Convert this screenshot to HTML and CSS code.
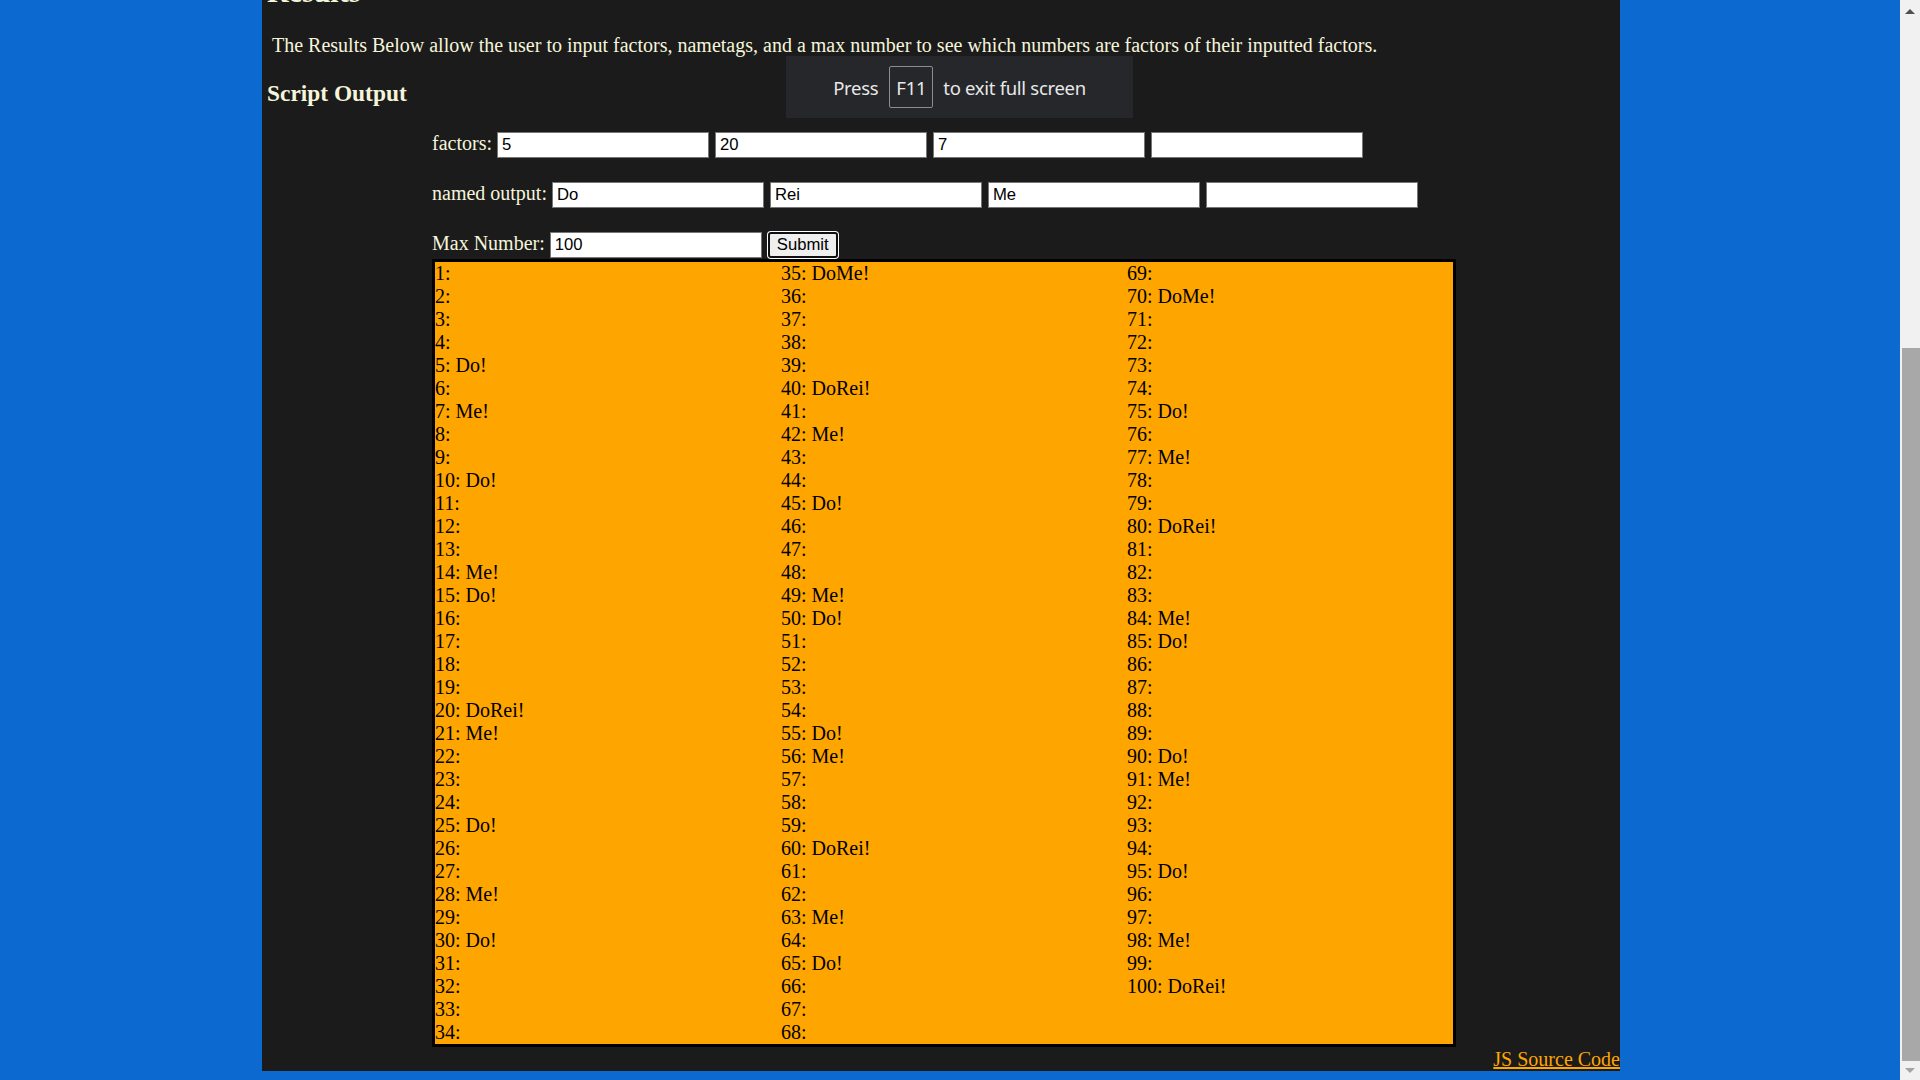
FILE: index.html
```html
<!DOCTYPE html>
<html lang="en">
<head>
<meta charset="utf-8">
<title>Factor Names</title>
<link rel="stylesheet" href="styles.css">
</head>
<body>
<div class="page">
  <h2 class="title">Results</h2>
  <p class="intro">The Results Below allow the user to input factors, nametags, and a max number to see which numbers are factors of their inputted factors.</p>
  <h3 class="subtitle">Script Output</h3>
  <div class="row row-factors">
    <span class="label">factors:</span>
    <input class="field" type="text" value="5">
    <input class="field" type="text" value="20">
    <input class="field" type="text" value="7">
    <input class="field" type="text" value="">
  </div>
  <div class="row row-names">
    <span class="label">named output:</span>
    <input class="field" type="text" value="Do">
    <input class="field" type="text" value="Rei">
    <input class="field" type="text" value="Me">
    <input class="field" type="text" value="">
  </div>
  <div class="row row-max">
    <span class="label">Max Number:</span>
    <input class="field" type="text" value="100">
    <button class="submit" type="button">Submit</button>
  </div>
  <div class="output">
    <div>1:</div><div>2:</div><div>3:</div><div>4:</div><div>5: Do!</div><div>6:</div><div>7: Me!</div><div>8:</div><div>9:</div><div>10: Do!</div>
    <div>11:</div><div>12:</div><div>13:</div><div>14: Me!</div><div>15: Do!</div><div>16:</div><div>17:</div><div>18:</div><div>19:</div><div>20: DoRei!</div>
    <div>21: Me!</div><div>22:</div><div>23:</div><div>24:</div><div>25: Do!</div><div>26:</div><div>27:</div><div>28: Me!</div><div>29:</div><div>30: Do!</div>
    <div>31:</div><div>32:</div><div>33:</div><div>34:</div><div>35: DoMe!</div><div>36:</div><div>37:</div><div>38:</div><div>39:</div><div>40: DoRei!</div>
    <div>41:</div><div>42: Me!</div><div>43:</div><div>44:</div><div>45: Do!</div><div>46:</div><div>47:</div><div>48:</div><div>49: Me!</div><div>50: Do!</div>
    <div>51:</div><div>52:</div><div>53:</div><div>54:</div><div>55: Do!</div><div>56: Me!</div><div>57:</div><div>58:</div><div>59:</div><div>60: DoRei!</div>
    <div>61:</div><div>62:</div><div>63: Me!</div><div>64:</div><div>65: Do!</div><div>66:</div><div>67:</div><div>68:</div><div>69:</div><div>70: DoMe!</div>
    <div>71:</div><div>72:</div><div>73:</div><div>74:</div><div>75: Do!</div><div>76:</div><div>77: Me!</div><div>78:</div><div>79:</div><div>80: DoRei!</div>
    <div>81:</div><div>82:</div><div>83:</div><div>84: Me!</div><div>85: Do!</div><div>86:</div><div>87:</div><div>88:</div><div>89:</div><div>90: Do!</div>
    <div>91: Me!</div><div>92:</div><div>93:</div><div>94:</div><div>95: Do!</div><div>96:</div><div>97:</div><div>98: Me!</div><div>99:</div><div>100: DoRei!</div>
  </div>
  <div class="footer"><a class="source-link" href="#">JS Source Code</a></div>
</div>

<div class="fs-toast">
  <span class="fs-text">Press</span>
  <span class="fs-key">F11</span>
  <span class="fs-text">to exit full screen</span>
</div>

<div class="scrollbar">
  <span class="sb-up"></span>
  <span class="sb-thumb"></span>
  <span class="sb-down"></span>
</div>
</body>
</html>
```

FILE: styles.css
```css
html, body {
  margin: 0;
  padding: 0;
  height: 1080px;
  overflow: hidden;
}

body {
  background: #0b69cf;
  font-family: "Liberation Serif", "Times New Roman", serif;
  padding-bottom: 9px;
  box-sizing: border-box;
}

.page {
  margin-top: -25px;
  margin-left: 262px;
  width: 1358px;
  box-sizing: border-box;
  padding-left: 5px;
  background: #1b1b1b;
  color: #f5f5dc;
}

.title {
  margin: 0 0 25px 0;
  font-size: 30px;
  line-height: 34px;
  font-weight: bold;
}

.intro {
  margin: 0 0 23px 0;
  padding-left: 5px;
  font-size: 20px;
  line-height: 23px;
}

.subtitle {
  margin: 0 0 25px 0;
  font-size: 23.4px;
  line-height: 27px;
  font-weight: bold;
}

.row {
  display: flex;
  align-items: baseline;
  gap: 5px;
  height: 26px;
  margin-left: 165px;
  font-size: 20px;
  line-height: 23px;
}

.row-factors { margin-bottom: 24px; }
.row-names { margin-bottom: 24px; }
.row-max { margin-bottom: 1px; }

.label {
  white-space: nowrap;
}

.field {
  box-sizing: border-box;
  width: 212px;
  height: 26px;
  margin: 0 1px 0 0;
  padding: 1px 4px;
  border: 1px solid #767676;
  border-radius: 0;
  background: #fff;
  color: #000;
  font-family: "Liberation Sans", Arial, sans-serif;
  font-size: 16.67px;
  outline: none;
}

.submit {
  box-sizing: border-box;
  width: 70px;
  height: 26px;
  margin: 0;
  padding: 0;
  border: 2px solid #101010;
  border-radius: 3px;
  box-shadow: 0 0 0 1px #ffffff;
  background: #efefef;
  color: #000;
  font-family: "Liberation Sans", Arial, sans-serif;
  font-size: 16.67px;
}

.output {
  box-sizing: border-box;
  width: 1024px;
  margin-left: 165px;
  border: 3px solid #000;
  background: #ffa500;
  color: #000;
  font-size: 20px;
  line-height: 23px;
  column-count: 3;
  column-gap: 20px;
}

.footer {
  padding-top: 1px;
  text-align: right;
  font-size: 20px;
  line-height: 23px;
}

.source-link {
  color: #ffa500;
  text-decoration: underline;
}

/* browser fullscreen notification overlay */
.fs-toast {
  position: fixed;
  left: 786px;
  top: 56px;
  width: 347px;
  height: 62px;
  background: #25272b;
  display: flex;
  align-items: center;
  justify-content: center;
  color: #e8e8e8;
  font-family: "Noto Sans", "Open Sans", sans-serif;
  font-size: 18.5px;
  letter-spacing: -0.3px;
}

.fs-key {
  box-sizing: border-box;
  width: 44px;
  height: 42px;
  margin: 0 10px 0 11px;
  border: 1px solid #8c8c8c;
  border-radius: 2px;
  display: flex;
  align-items: center;
  justify-content: center;
}

/* window scrollbar (page is scrolled to the bottom) */
.scrollbar {
  position: fixed;
  top: 0;
  right: 0;
  width: 20px;
  height: 1080px;
  background: #f1f1f1;
}

.sb-up {
  position: absolute;
  left: 5px;
  top: 9px;
  width: 0;
  height: 0;
  border-left: 5px solid transparent;
  border-right: 5px solid transparent;
  border-bottom: 5px solid #505050;
}

.sb-thumb {
  position: absolute;
  left: 2px;
  right: 0;
  top: 348px;
  height: 713px;
  background: #a8a8a8;
}

.sb-down {
  position: absolute;
  left: 5px;
  top: 1068px;
  width: 0;
  height: 0;
  border-left: 5px solid transparent;
  border-right: 5px solid transparent;
  border-top: 5px solid #a3a3a3;
}
```
